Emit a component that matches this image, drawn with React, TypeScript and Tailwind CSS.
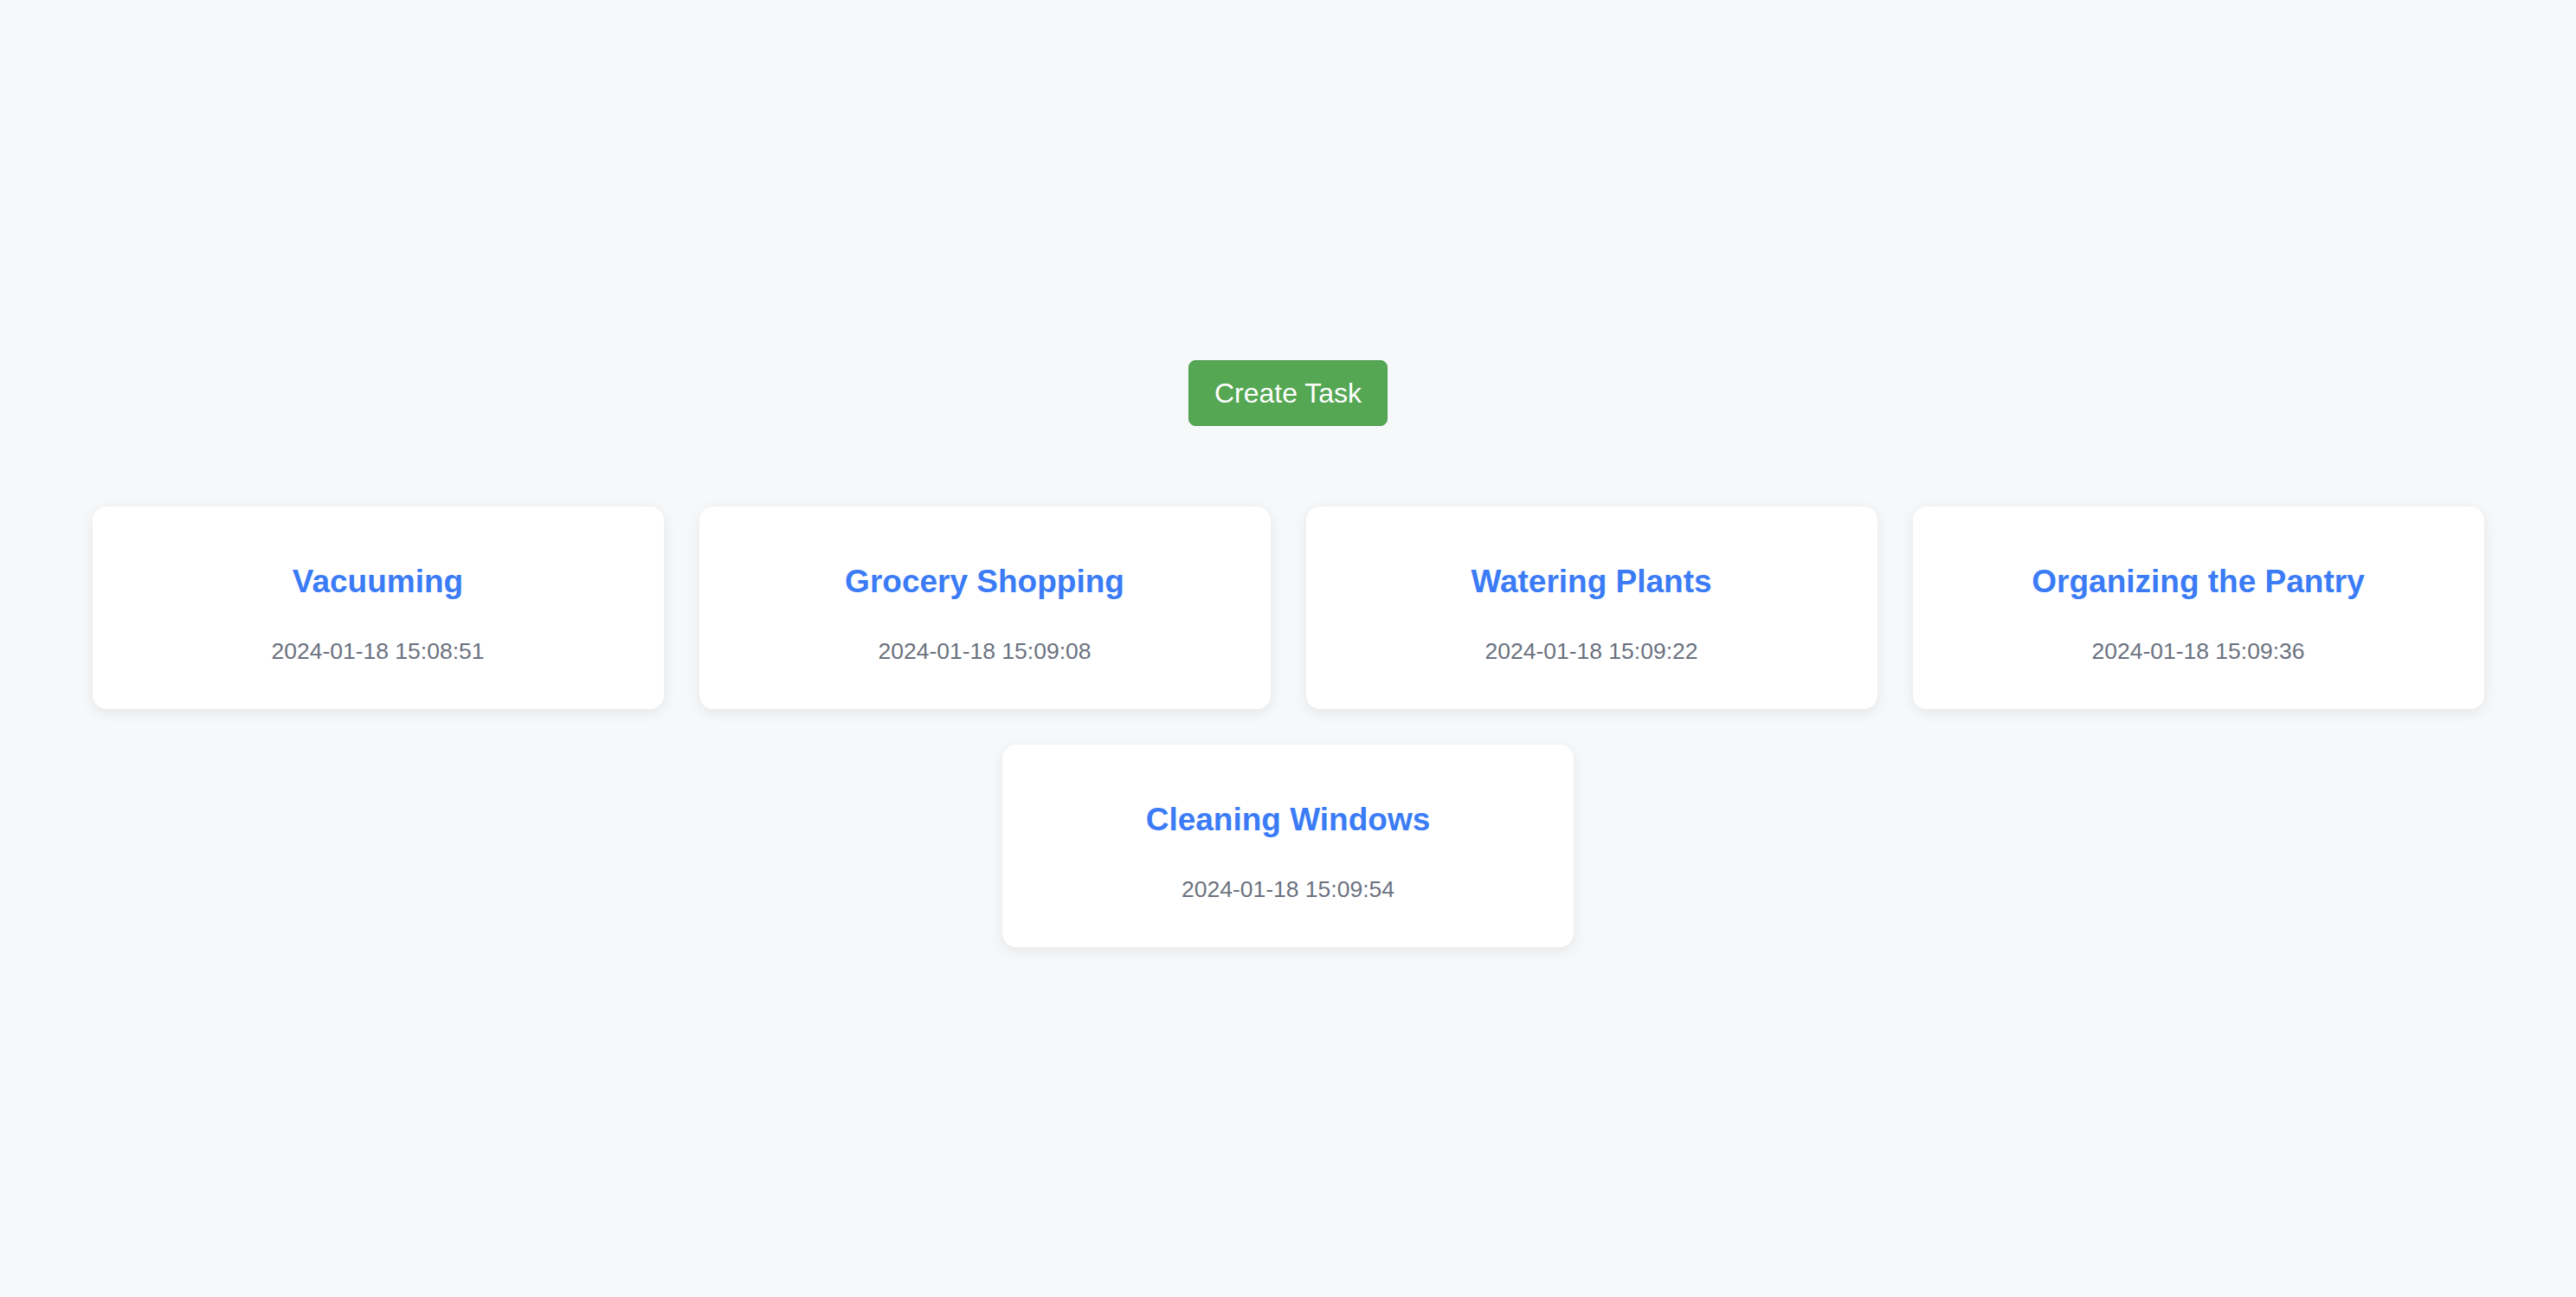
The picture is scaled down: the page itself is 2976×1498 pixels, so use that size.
import React from 'react';

interface Task {
  title: string;
  createdAt: string;
}

const tasks: Task[] = [
  { title: 'Vacuuming', createdAt: '2024-01-18 15:08:51' },
  { title: 'Grocery Shopping', createdAt: '2024-01-18 15:09:08' },
  { title: 'Watering Plants', createdAt: '2024-01-18 15:09:22' },
  { title: 'Organizing the Pantry', createdAt: '2024-01-18 15:09:36' },
  { title: 'Cleaning Windows', createdAt: '2024-01-18 15:09:54' },
];

const TaskCard: React.FC<{ task: Task }> = ({ task }) => (
  <div className="w-[660px] rounded-2xl bg-white pt-[64px] pb-[51px] text-center shadow-[0_4px_16px_rgba(0,0,0,0.08)]">
    <h3 className="mb-[41px] text-[37px] leading-[46px] font-bold text-[#3b7cf6]">{task.title}</h3>
    <p className="text-[26.5px] leading-[32px] text-[#6b7280]">{task.createdAt}</p>
  </div>
);

export default function App() {
  return (
    <div className="min-h-screen bg-[#f7f8fa] pt-[416px] font-['Liberation_Sans',Arial,sans-serif]">
      <div className="flex justify-center">
        <button className="h-[76px] w-[230px] rounded-lg border border-[#4f9e4e] bg-[#55a754] text-[32px] text-white">
          Create Task
        </button>
      </div>

      {/* task cards */}
      <div className="mt-[93px] flex flex-wrap justify-center gap-[41px]">
        {tasks.map((t) => (
          <TaskCard key={t.title} task={t} />
        ))}
      </div>
    </div>
  );
}
